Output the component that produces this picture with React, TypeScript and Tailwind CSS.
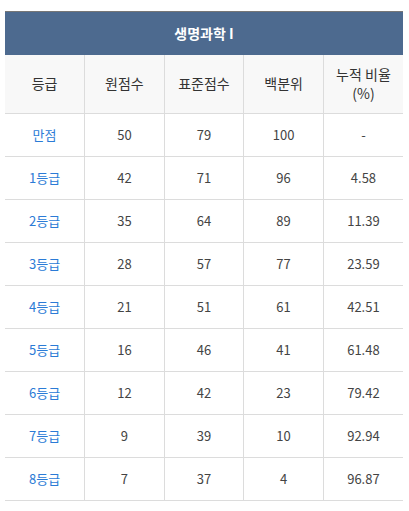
import React from 'react';

const rows = [
  ['만점', '50', '79', '100', '-'],
  ['1등급', '42', '71', '96', '4.58'],
  ['2등급', '35', '64', '89', '11.39'],
  ['3등급', '28', '57', '77', '23.59'],
  ['4등급', '21', '51', '61', '42.51'],
  ['5등급', '16', '46', '41', '61.48'],
  ['6등급', '12', '42', '23', '79.42'],
  ['7등급', '9', '39', '10', '92.94'],
  ['8등급', '7', '37', '4', '96.87'],
];

const heads = ['등급', '원점수', '표준점수', '백분위'];

export default function App() {
  return (
    <div className="bg-white w-[409px] h-[511px] pt-[11px] pl-[5px] font-['Noto_Sans_CJK_KR',sans-serif]">
      <table className="w-[398px] border-collapse table-fixed">
        <thead>
          <tr>
            <th
              colSpan={5}
              className="h-[43px] border-t border-t-[#777] bg-[#4d6a8f] text-white text-[14px] font-bold text-center p-0"
            >
              생명과학 I
            </th>
          </tr>
          <tr className="bg-[#f8f8f8]">
            {heads.map((h, i) => (
              <th
                key={i}
                className="h-[59px] border-b border-r border-[#dcdcdc] text-[14px] font-normal text-[#333] p-0"
              >
                {h}
              </th>
            ))}
            <th className="h-[59px] border-b border-[#dcdcdc] text-[14px] font-normal text-[#333] leading-[19px] p-0">
              <div>누적 비율</div>
              <div>(%)</div>
            </th>
          </tr>
        </thead>
        <tbody>
          {rows.map((r, i) => (
            <tr key={i}>
              {r.map((c, j) => (
                <td
                  key={j}
                  className={
                    'h-[43px] border-b border-[#dcdcdc] text-center text-[13px] p-0 ' +
                    (j < 4 ? 'border-r ' : '') +
                    (j === 0 ? 'text-[#2b7bd6]' : 'text-[#444]')
                  }
                >
                  {c}
                </td>
              ))}
            </tr>
          ))}
        </tbody>
      </table>
    </div>
  );
}
